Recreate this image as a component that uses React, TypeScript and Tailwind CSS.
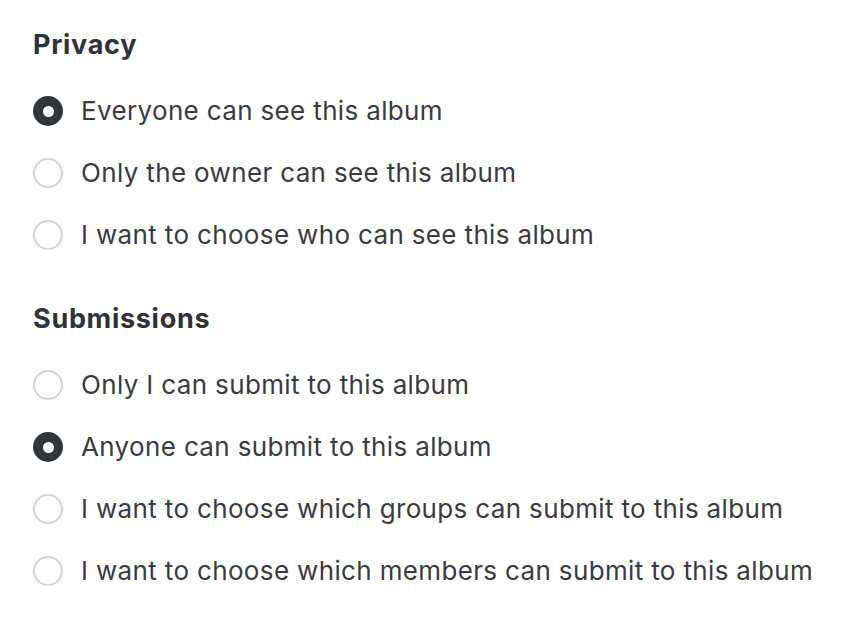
const sections = [
  {
    title: 'Privacy',
    options: [
      { label: 'Everyone can see this album', checked: true },
      { label: 'Only the owner can see this album', checked: false },
      { label: 'I want to choose who can see this album', checked: false },
    ],
  },
  {
    title: 'Submissions',
    options: [
      { label: 'Only I can submit to this album', checked: false },
      { label: 'Anyone can submit to this album', checked: true },
      { label: 'I want to choose which groups can submit to this album', checked: false },
      { label: 'I want to choose which members can submit to this album', checked: false },
    ],
  },
]

const Radio = ({ checked }: { checked: boolean }) =>
  checked ? (
    <span className="w-[30px] h-[30px] rounded-full bg-[#33373b] flex items-center justify-center shrink-0">
      <span className="w-[11px] h-[11px] rounded-full bg-white"></span>
    </span>
  ) : (
    <span className="w-[30px] h-[30px] rounded-full border-2 border-[#d4d4d6] bg-white shrink-0"></span>
  )

export default function App() {
  return (
    <div
      className="w-[856px] h-[622px] bg-white pl-[33px] pt-[30px] text-[#3a3b3d]"
      style={{ fontFamily: 'Inter, "Noto Sans", sans-serif' }}
    >
      {sections.map((section, i) => (
        <div key={section.title} className={i > 0 ? 'mt-[38px]' : ''}>
          <h2 className="text-[27px] leading-[30px] font-bold tracking-[0.7px] text-[#2f3236]">{section.title}</h2>
          <div className="mt-[20px]">
            {section.options.map((opt) => (
              <label key={opt.label} className="flex items-center h-[62px] gap-[18px]">
                <Radio checked={opt.checked} />
                <span className="text-[26px] leading-[30px] tracking-[0.35px]">{opt.label}</span>
              </label>
            ))}
          </div>
        </div>
      ))}
    </div>
  )
}
